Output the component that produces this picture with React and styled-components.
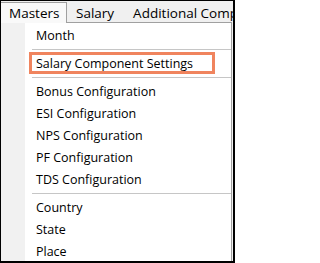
import React from "react";
import styled, { createGlobalStyle } from "styled-components";

const Global = createGlobalStyle`
  html, body { margin: 0; padding: 0; background: #ffffff; }
  * { box-sizing: border-box; }
`;

const Frame = styled.div`
  width: 235px;
  height: 263px;
  border: 1px solid #000;
  border-right-width: 2px;
  border-bottom-width: 2px;
  background: #f0f0f0;
  display: flex;
  flex-direction: column;
  overflow: hidden;
  font-family: "Open Sans", "Noto Sans", sans-serif;
  font-size: 12.5px;
  color: #000;
`;

const MenuBar = styled.div`
  height: 21px;
  display: flex;
  align-items: stretch;
  white-space: nowrap;
  position: relative;
  z-index: 1;
`;

const BarItem = styled.div`
  display: flex;
  align-items: center;
  padding: 0 9px 0 ${(p) => (p.$open ? "8px" : "9px")};
  border: 1px solid ${(p) => (p.$open ? "#a0a0a0" : "transparent")};
  border-left: none;
  border-bottom: none;
  margin-top: 1px;
  height: 21px;
  background: ${(p) => (p.$open ? "#f9f9f9" : "transparent")};
  font-size: 13.5px;
  width: ${(p) => (p.$open ? "66px" : "auto")};
  flex-shrink: 0;
`;

const Dropdown = styled.div`
  flex: 1;
  margin-right: 1px;
  border-top: 1px solid #a0a0a0;
  border-right: 1px solid #a0a0a0;
  background: linear-gradient(to right, #f1f1f1 0, #f1f1f1 24px, #ffffff 24px);
  padding-top: 1px;
  display: flex;
  flex-direction: column;
`;

const Item = styled.div`
  height: 22px;
  display: flex;
  align-items: center;
  padding-left: ${(p) => (p.$highlight ? "28px" : "35px")};
  white-space: nowrap;
`;

const Highlight = styled.span`
  display: flex;
  align-items: center;
  height: 22px;
  width: 186px;
  border: 3px solid #f0845e;
  padding-left: 4px;
`;

const Separator = styled.div`
  height: 6px;
  display: flex;
  align-items: center;
  padding-left: 31px;
  &::after {
    content: "";
    flex: 1;
    height: 1px;
    background: #c6c6c6;
  }
`;

const groups = [
  ["Month"],
  ["Salary Component Settings"],
  ["Bonus Configuration", "ESI Configuration", "NPS Configuration", "PF Configuration", "TDS Configuration"],
  ["Country", "State", "Place"],
];

export default function App() {
  return (
    <>
      <Global />
      <Frame>
        <MenuBar>
          <BarItem $open>Masters</BarItem>
          <BarItem>Salary</BarItem>
          <BarItem>Additional Components</BarItem>
        </MenuBar>
        <Dropdown>
          {groups.map((g, gi) => (
            <React.Fragment key={gi}>
              {gi > 0 && <Separator />}
              {g.map((label) =>
                label === "Salary Component Settings" ? (
                  <Item key={label} $highlight>
                    <Highlight>{label}</Highlight>
                  </Item>
                ) : (
                  <Item key={label}>{label}</Item>
                )
              )}
            </React.Fragment>
          ))}
        </Dropdown>
      </Frame>
    </>
  );
}
